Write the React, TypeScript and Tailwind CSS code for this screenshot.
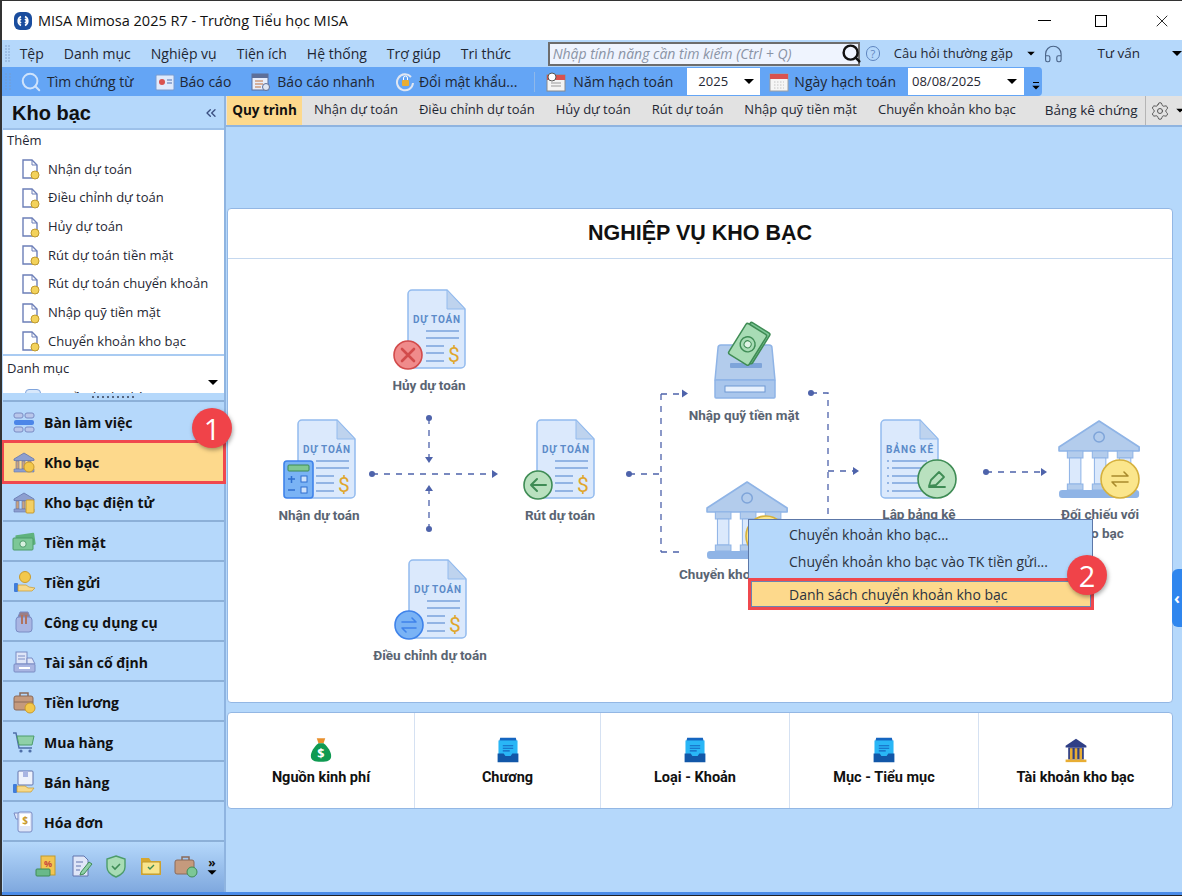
import { ChevronsLeft, Search, Settings, Headphones, X } from "lucide-react";

const menuItems = ["Tệp", "Danh mục", "Nghiệp vụ", "Tiện ích", "Hệ thống", "Trợ giúp", "Tri thức"];
const tabs = ["Nhận dự toán", "Điều chỉnh dự toán", "Hủy dự toán", "Rút dự toán", "Nhập quỹ tiền mặt", "Chuyển khoản kho bạc"];
const addLinks = ["Nhận dự toán", "Điều chỉnh dự toán", "Hủy dự toán", "Rút dự toán tiền mặt", "Rút dự toán chuyển khoản", "Nhập quỹ tiền mặt", "Chuyển khoản kho bạc"];

const Caret = ({ className = "" }: { className?: string }) => (
  <span className={`inline-block h-0 w-0 border-x-[5px] border-t-[5px] border-x-transparent border-t-black ${className}`} />
);

const Grip = () => (
  <div className="grid w-[6px] grid-cols-2 gap-[1px] opacity-40">
    {Array.from({ length: 12 }).map((_, i) => (
      <span key={i} className="h-[2px] w-[2px] bg-[#7a9cc8]" />
    ))}
  </div>
);

const SmallIcon = ({ children }: { children: React.ReactNode }) => (
  <svg viewBox="0 0 24 24" className="h-[24px] w-[24px] shrink-0">
    {children}
  </svg>
);

const BankShape = () => (
  <g>
    <path d="M2 9 12 3l10 6v1.5H2z" fill="#8d9fd0" stroke="#6275ad" strokeWidth=".8" />
    <path d="M4 11h3v8H4zM10 11h3v8h-3zM16 11h3v8h-3z" fill="#c9a27e" stroke="#6275ad" strokeWidth=".6" />
    <path d="M2 19h20v3H2z" fill="#8d9fd0" stroke="#6275ad" strokeWidth=".6" />
  </g>
);

const navItems: { label: string; active?: boolean; icon: React.ReactNode }[] = [
  {
    label: "Bàn làm việc",
    icon: (
      <SmallIcon>
        <rect x="2" y="3" width="9" height="5" rx="2" fill="#b9c6ea" stroke="#7a8cc4" />
        <rect x="13" y="3" width="9" height="5" rx="2" fill="#b9c6ea" stroke="#7a8cc4" />
        <rect x="2" y="10" width="20" height="5" rx="2" fill="#4c86e8" />
        <rect x="2" y="17" width="9" height="5" rx="2" fill="#b9c6ea" stroke="#7a8cc4" />
        <rect x="13" y="17" width="9" height="5" rx="2" fill="#b9c6ea" stroke="#7a8cc4" />
      </SmallIcon>
    ),
  },
  {
    label: "Kho bạc",
    active: true,
    icon: (
      <SmallIcon>
        <BankShape />
        <circle cx="17" cy="17" r="5" fill="#f3c84b" stroke="#c99a2c" />
      </SmallIcon>
    ),
  },
  {
    label: "Kho bạc điện tử",
    icon: (
      <SmallIcon>
        <BankShape />
        <rect x="14" y="10" width="8" height="13" rx="1" fill="#f3cf63" stroke="#c99a2c" />
      </SmallIcon>
    ),
  },
  {
    label: "Tiền mặt",
    icon: (
      <SmallIcon>
        <rect x="4" y="4" width="19" height="12" rx="1" fill="#5fb27d" transform="rotate(-8 13 10)" />
        <rect x="1" y="8" width="20" height="12" rx="1" fill="#7cc796" stroke="#4c9c6a" />
        <circle cx="11" cy="14" r="3.2" fill="#d8f0df" stroke="#4c9c6a" />
      </SmallIcon>
    ),
  },
  {
    label: "Tiền gửi",
    icon: (
      <SmallIcon>
        <circle cx="13" cy="7" r="5.5" fill="#f3c84b" stroke="#c99a2c" />
        <rect x="2" y="13" width="4" height="9" rx="1" fill="#3f7ddb" />
        <path d="M6 15h8l3 2 6 1-3 3H6z" fill="#f6d98a" stroke="#c99a2c" strokeWidth=".7" />
      </SmallIcon>
    ),
  },
  {
    label: "Công cụ dụng cụ",
    icon: (
      <SmallIcon>
        <path d="M8 2h8l2 5H6z" fill="#9a7f88" stroke="#7a8cc4" />
        <rect x="4" y="7" width="16" height="15" rx="3" fill="#a9b5e2" stroke="#7a8cc4" />
        <path d="M9 5h2v9H9zM13 5h2v9h-2z" fill="#b0735f" />
      </SmallIcon>
    ),
  },
  {
    label: "Tài sản cố định",
    icon: (
      <SmallIcon>
        <rect x="4" y="2" width="11" height="12" fill="#dfe6f8" stroke="#7a8cc4" />
        <path d="M6 6h7M6 9h7" stroke="#7a8cc4" />
        <path d="M15 8h5l3 6H15z" fill="#dfe6f8" stroke="#7a8cc4" />
        <rect x="2" y="14" width="21" height="8" rx="1" fill="#a9b5e2" stroke="#7a8cc4" />
        <rect x="7" y="17" width="11" height="2" fill="#fff" />
      </SmallIcon>
    ),
  },
  {
    label: "Tiền lương",
    icon: (
      <SmallIcon>
        <path d="M8 6V3h8v3" fill="none" stroke="#8a6a5a" strokeWidth="1.5" />
        <rect x="2" y="6" width="19" height="14" rx="2" fill="#c59a7d" stroke="#8a6a5a" />
        <path d="M2 12h19" stroke="#8a6a5a" />
        <circle cx="18" cy="18" r="5" fill="#f3c84b" stroke="#c99a2c" />
      </SmallIcon>
    ),
  },
  {
    label: "Mua hàng",
    icon: (
      <SmallIcon>
        <path d="M1 3h3l3 15h13" fill="none" stroke="#4f6fa8" strokeWidth="1.4" />
        <path d="M5 6h17l-2 9H7z" fill="#8fd0a8" stroke="#4c9c6a" />
        <circle cx="9" cy="21" r="1.6" fill="#4f6fa8" />
        <circle cx="18" cy="21" r="1.6" fill="#4f6fa8" />
      </SmallIcon>
    ),
  },
  {
    label: "Bán hàng",
    icon: (
      <SmallIcon>
        <rect x="6" y="1" width="15" height="14" rx="1" fill="#eef2fc" stroke="#6275ad" />
        <rect x="11" y="1" width="5" height="6" fill="#a9b5e2" />
        <rect x="1" y="14" width="4" height="9" rx="1" fill="#3f7ddb" />
        <path d="M5 16h8l3 2 6 0-3 4H5z" fill="#f6d98a" stroke="#c99a2c" strokeWidth=".7" />
      </SmallIcon>
    ),
  },
  {
    label: "Hóa đơn",
    icon: (
      <SmallIcon>
        <path d="M2 3h6v6H4z" fill="#dfe6f8" stroke="#7a8cc4" />
        <rect x="6" y="2" width="14" height="20" rx="2" fill="#dfe6f8" stroke="#7a8cc4" />
        <rect x="8" y="4" width="10" height="12" fill="#fff" />
        <text x="13" y="14" fontSize="10" fontWeight="700" textAnchor="middle" fill="#c99a2c">$</text>
      </SmallIcon>
    ),
  },
];

// coordinates of the diagram drawings below are page pixels (viewBox starts at the card corner)
const DocBase = ({ x, y, title = "DỰ TOÁN", dollar = true }: { x: number; y: number; title?: string; dollar?: boolean }) => (
  <g transform={`translate(${x} ${y})`}>
    <path d="M4 0h35l18 19v55a4 4 0 0 1-4 4H4a4 4 0 0 1-4-4V4a4 4 0 0 1 4-4z" fill="#dbe9fc" stroke="#93bbee" strokeWidth="1.5" />
    <path d="M39 0l18 19H39z" fill="#bed3ee" stroke="#93bbee" strokeWidth="1" />
    <text x="5" y="33" fontSize="10" fontWeight="700" fill="#5b8bc9" textLength="47" fontFamily="Roboto, sans-serif">{title}</text>
    {dollar ? (
      <g stroke="#7ba3dc" strokeWidth="1.4">
        <path d="M18 41h33M18 48h33M18 56h18M18 63h18M18 71h18" />
      </g>
    ) : (
      <g stroke="#7ba3dc" strokeWidth="1.4">
        <path d="M11 41h35M11 48h35M11 56h30M11 63h30M11 71h30" />
        <path d="M6 41h2M6 48h2M6 56h2M6 63h2M6 71h2" />
      </g>
    )}
    {dollar && <text x="46" y="72" fontSize="21" textAnchor="middle" fill="#e0a62c" fontFamily="Roboto, sans-serif">$</text>}
  </g>
);

const Bank = ({ x, y }: { x: number; y: number }) => (
  <g transform={`translate(${x} ${y}) scale(1.04 1)`}>
    <path d="M39.5 1 78 27v4H1v-4z" fill="#b3ccec" stroke="#8fb4e6" strokeWidth="1.6" strokeLinejoin="round" />
    <circle cx="39.5" cy="17" r="5" fill="#b3ccec" stroke="#7ea4d9" strokeWidth="1.4" />
    {[9, 33, 57].map((px) => (
      <g key={px}>
        <rect x={px} y="31" width="15" height="7" fill="#b3ccec" stroke="#8fb4e6" />
        <rect x={px + 2} y="38" width="11" height="26" fill="#dbe9fc" stroke="#8fb4e6" />
        <rect x={px} y="64" width="15" height="6" fill="#b3ccec" stroke="#8fb4e6" />
      </g>
    ))}
    <rect x="1" y="70" width="77" height="8" rx="3" fill="#8fb4e6" />
  </g>
);

const Badge = ({ cx, cy, r, fill, stroke, children }: { cx: number; cy: number; r: number; fill: string; stroke: string; children: React.ReactNode }) => (
  <g>
    <circle cx={cx} cy={cy} r={r} fill={fill} stroke={stroke} strokeWidth="1.6" />
    <g transform={`translate(${cx} ${cy})`} fill="none" stroke={stroke} strokeWidth="2" strokeLinecap="round" strokeLinejoin="round">
      {children}
    </g>
  </g>
);

const Dash = ({ d }: { d: string }) => <path d={d} fill="none" stroke="#4e63ab" strokeWidth="1.3" strokeDasharray="6 6" />;
const Dot = ({ x, y }: { x: number; y: number }) => <circle cx={x} cy={y} r="3" fill="#4e63ab" />;
const Tip = ({ x, y, dir }: { x: number; y: number; dir: "r" | "u" | "d" }) => {
  const pts = dir === "r" ? `${x - 5},${y - 4} ${x + 1},${y} ${x - 5},${y + 4}` : dir === "d" ? `${x - 4},${y - 5} ${x},${y + 1} ${x + 4},${y - 5}` : `${x - 4},${y + 5} ${x},${y - 1} ${x + 4},${y + 5}`;
  return <polygon points={pts} fill="#4e63ab" />;
};

const Diagram = () => (
  <svg viewBox="228 209 944 493" className="absolute inset-0 h-full w-full">
    <Dash d="M372 474H496" />
    <Dash d="M429 418V461" />
    <Dash d="M429 530V487" />
    <Dot x={372} y={474} /><Tip x={497} y={474} dir="r" />
    <Dot x={429} y={418} /><Tip x={429} y={462} dir="d" />
    <Dot x={429} y={529} /><Tip x={429} y={486} dir="u" />

    <Dot x={629} y={474} />
    <Dash d="M629 474H661M661 394V552M661 394H686M661 552H680" />
    <Tip x={687} y={393.500} dir="r" />
    <Dot x={811} y={393} />
    <Dash d="M811 393H828V530M828 471H856" />
    <Tip x={858} y={471} dir="r" />
    <Dot x={986} y={472} />
    <Dash d="M986 472H1044" />
    <Tip x={1046} y={472} dir="r" />

    <DocBase x={408} y={290} />
    <Badge cx={408} cy={355} r={14} fill="#f08b8b" stroke="#d24b4b">
      <path d="M-6-6 6 6M6-6-6 6" strokeWidth="2.600" />
    </Badge>

    <DocBase x={298} y={420} />
    <g>
      <rect x="284" y="461" width="29" height="37" rx="3" fill="#7ab3f5" stroke="#3f83ea" strokeWidth="1.6" />
      <rect x="288" y="465" width="21" height="6" rx="1" fill="#7fc793" stroke="#3c8a55" />
      <path d="M288 479h7M291.500 476v7M288 490h7" stroke="#2f6fd0" strokeWidth="1.5" />
      <rect x="301" y="476" width="6" height="6" fill="#cfe2fb" stroke="#2f6fd0" />
      <rect x="301" y="487" width="6" height="6" fill="#cfe2fb" stroke="#2f6fd0" />
    </g>

    <DocBase x={537} y={420} />
    <Badge cx={538} cy={485} r={14} fill="#b9e1bf" stroke="#3f8c55">
      <path d="M8 0H-7M-1-6-7 0-1 6" />
    </Badge>

    <DocBase x={409} y={560} />
    <Badge cx={409} cy={625} r={14} fill="#7ab3f5" stroke="#3f83ea">
      <path d="M-7-3H7M3-7 7-3M7 3H-7M-3 7-7 3" strokeWidth="1.6" />
    </Badge>

    {/* cash drawer */}
    <g>
      <path d="M727 345h42q3 0 3 3l3 32H715l3-32q0-3 3-3z" fill="#b3ccec" stroke="#8fb4e6" strokeWidth="1.5" />
      <rect x="730" y="363" width="32" height="5" rx="1" fill="#7ea4d9" />
      <rect x="715" y="380" width="60" height="18" rx="1" fill="#a9c6ec" stroke="#8fb4e6" strokeWidth="1.5" />
      <rect x="725" y="386" width="40" height="6" fill="#e6f0fd" stroke="#6f97d2" />
      <g transform="rotate(32 749 344)">
        <rect x="739" y="324" width="23" height="36" rx="2" fill="#7cc796" stroke="#3f8c55" strokeWidth="1.5" />
        <rect x="736" y="327" width="24" height="36" rx="2" fill="#a8dcb5" stroke="#3f8c55" strokeWidth="1.5" />
        <circle cx="748" cy="345" r="7.500" fill="#a8dcb5" stroke="#3f8c55" strokeWidth="1.4" />
        <circle cx="748" cy="345" r="3.500" fill="#dff3e4" stroke="#3f8c55" />
      </g>
    </g>

    <Bank x={706} y={481} />
    <circle cx="766" cy="536" r="20" fill="#fbe68c" stroke="#d6b13d" strokeWidth="1.6" />

    <DocBase x={881} y={420} title="BẢNG KÊ" dollar={false} />
    <Badge cx={937} cy={479} r={19} fill="#b9e1bf" stroke="#3f8c55">
      <path d="M-8 7-6 1 2-7l5 5-8 8zM-8 8H8" strokeWidth="1.8" />
    </Badge>

    <Bank x={1058} y={420} />
    <Badge cx={1120} cy={479} r={19} fill="#fbe68c" stroke="#d6b13d">
      <path d="M-8-3H8M4-7 8-3M8 3H-8M-4 7-8 3" stroke="#a98a2c" strokeWidth="1.6" />
    </Badge>
  </svg>
);

const nodeLabel = "absolute -translate-x-1/2 whitespace-nowrap font-['Roboto',_sans-serif] text-[13.500px] font-bold text-[#5a6472]";

const ContextMenu = () => (
  <div className="absolute left-[520px] top-[310px] z-10 flex h-[91px] w-[345px] flex-col border border-[#5c77a8] bg-[#b5d8fb] pt-px text-[14px] text-[#2c3340]">
    <div className="flex h-[27px] shrink-0 items-center pl-[40px]">Chuyển khoản kho bạc...</div>
    <div className="flex h-[27px] shrink-0 items-center pl-[40px]">Chuyển khoản kho bạc vào TK tiền gửi...</div>
    <div className="relative ml-[2px] mr-px mt-[6px] flex h-[26px] shrink-0 items-center border border-[#6b84b0] bg-[#fdd98c] pl-[37px] outline-[3px] outline-[#f0484e]">
      Danh sách chuyển khoản kho bạc
    </div>
  </div>
);

const Callout = ({ n, className }: { n: number; className: string }) => (
  <div className={`absolute z-20 flex h-[40px] w-[40px] items-center justify-center rounded-full bg-[#f04349] text-[29px] leading-none text-white shadow-[1px_2px_4px_rgba(0,0,0,0.35)] ${className}`}>
    {n}
  </div>
);

const MoneyBag = () => (
  <svg viewBox="0 0 26 30" className="h-[26px] w-[22px]">
    <path d="M8 1h10l-2 6h-6z" fill="#e88f2c" />
    <path d="M10 7h6c5 4 9 10 9 15 0 5-4 7-12 7S1 27 1 22c0-5 4-11 9-15z" fill="#0f9a52" />
    <text x="13" y="24" fontSize="15" fontWeight="700" fill="#fff" textAnchor="middle">$</text>
  </svg>
);

const Tray = () => (
  <svg viewBox="0 0 26 30" className="h-[26px] w-[24px]">
    <path d="M4 1h18l1 4H3z" fill="#1565c0" />
    <rect x="2" y="4" width="22" height="20" fill="#29b6f6" />
    <path d="M7 10h12M7 13h12M7 16h8" stroke="#1565c0" strokeWidth="1.2" />
    <path d="M1 19h7l2 3h6l2-3h7v10H1z" fill="#1257a8" />
  </svg>
);

const MiniBank = () => (
  <svg viewBox="0 0 26 30" className="h-[26px] w-[26px]">
    <path d="M13 2 25 10v2H1v-2z" fill="#2f3f86" />
    <path d="M4 12h18v14H4z" fill="#2f3f86" />
    <path d="M6 13h3v13H6zM11.500 13h3v13h-3zM17 13h3v13h-3z" fill="#e8ad33" />
    <rect x="1" y="26" width="24" height="3" fill="#e8ad33" />
  </svg>
);

const shortcuts = [
  { label: "Nguồn kinh phí", icon: <MoneyBag /> },
  { label: "Chương", icon: <Tray /> },
  { label: "Loại - Khoản", icon: <Tray /> },
  { label: "Mục - Tiểu mục", icon: <Tray /> },
  { label: "Tài khoản kho bạc", icon: <MiniBank /> },
];

export default function App() {
  return (
    <div className="relative flex h-[896px] w-[1182px] flex-col overflow-hidden border-l-2 border-t border-[#333] bg-[#b5d8fb] font-['Open_Sans',_sans-serif] text-[14px] text-[#1f2733]">
      {/* title bar */}
      <div className="flex h-[39px] shrink-0 items-center bg-white pl-[11px] text-[14.500px] text-[#111]">
        <svg viewBox="0 0 20 20" className="h-[20px] w-[20px]">
          <rect x="1" y="1" width="18" height="18" rx="6" fill="#1a4d9e" />
          <path d="M8 5.500A5 5 0 0 0 8 14.500M12 5.500A5 5 0 0 1 12 14.500M8 8 6 10l2 2M12 8l2 2-2 2" fill="none" stroke="#fff" strokeWidth="1.6" />
        </svg>
        <span className="ml-[5px]">MISA Mimosa 2025 R7 - Trường Tiểu học MISA</span>
        <div className="ml-auto flex items-center">
          <span className="mr-[44px] h-px w-[13px] bg-black" />
          <span className="mr-[45px] h-[12px] w-[12px] border border-black" />
          <X size={20} strokeWidth={1} className="mr-[10px] text-black" />
        </div>
      </div>

      {/* menu bar */}
      <div className="flex h-[27px] shrink-0 items-center whitespace-nowrap pl-[3px]">
        <Grip />
        <div className="ml-[9px] flex w-[528px] shrink-0 gap-[20px] text-[14px]">
          {menuItems.map((m) => (
            <span key={m}>{m}</span>
          ))}
        </div>
        <div className="flex h-[24px] w-[312px] shrink-0 items-center justify-between border-2 border-[#6d6d6d] bg-[#eff4fe] pl-[3px] text-[14px] italic text-[#8a93a5]">
          <span>Nhập tính năng cần tìm kiếm (Ctrl + Q)</span>
          <Search size={21} strokeWidth={2.8} className="relative left-[4px] text-[#111]" />
        </div>
        <span className="ml-[6px] flex h-[15px] w-[15px] items-center justify-center rounded-full border border-[#5f86c0] text-[11px] leading-none text-[#5f86c0]">?</span>
        <span className="ml-[14px] text-[13px]">Câu hỏi thường gặp</span>
        <Caret className="ml-[13px] scale-75" />
        <Headphones size={22} strokeWidth={1.3} className="ml-[7px] text-[#4a6488]" />
        <span className="ml-[34px] text-[13.500px]">Tư vấn</span>
        <Caret className="ml-[32px]" />
      </div>

      {/* tool bar */}
      <div className="flex h-[29px] w-[1040px] shrink-0 items-center rounded-r-sm bg-[#64a5f5] pl-[3px]">
        <Grip />
        <Search size={22} strokeWidth={2.2} className="ml-[9px] text-[#cfe3fb]" />
        <span className="ml-[5px]">Tìm chứng từ</span>
        <svg viewBox="0 0 20 20" className="ml-[21px] h-[20px] w-[20px]">
          <rect x="1" y="3" width="18" height="15" rx="1" fill="#dfeafc" stroke="#7a9cd0" />
          <circle cx="7" cy="10" r="3" fill="#d9524e" />
          <path d="M12 8h5M12 11h5" stroke="#4c6fb0" />
        </svg>
        <span className="ml-[5px]">Báo cáo</span>
        <svg viewBox="0 0 20 20" className="ml-[20px] h-[20px] w-[20px]">
          <rect x="1" y="2" width="16" height="16" fill="#e8eefb" stroke="#5d6f99" />
          <rect x="1" y="2" width="16" height="4" fill="#5d6f99" />
          <path d="M4 9h8M4 12h8M4 15h6" stroke="#c0703c" />
          <circle cx="15" cy="15" r="3.500" fill="#dfe6f2" stroke="#5d6f99" />
        </svg>
        <span className="ml-[6px]">Báo cáo nhanh</span>
        <svg viewBox="0 0 20 20" className="ml-[20px] h-[20px] w-[20px]">
          <path d="M16 5A8 8 0 1 0 18 11" fill="none" stroke="#dfe6f2" strokeWidth="2" />
          <rect x="7" y="8" width="7" height="6" rx="1" fill="#e8ad33" />
          <path d="M8.500 8V6a2 2 0 0 1 4 0v2" fill="none" stroke="#fff" />
        </svg>
        <span className="ml-[4px]">Đổi mật khẩu...</span>
        <span className="ml-[17px] h-[20px] w-px bg-[#8fb8ea]" />
        <svg viewBox="0 0 20 20" className="ml-[11px] h-[20px] w-[20px]">
          <rect x="1" y="3" width="18" height="16" fill="#f3f3f3" stroke="#8a8a8a" />
          <rect x="1" y="3" width="18" height="5" fill="#d9524e" />
          <circle cx="6" cy="5" r="4" fill="#fff" stroke="#555" />
          <path d="M5 11h10M5 14h10" stroke="#999" />
        </svg>
        <span className="ml-[7px]">Năm hạch toán</span>
        <div className="ml-[14px] flex h-[27px] w-[73px] items-center justify-between bg-white pl-[11px] pr-[6px] text-[13px]">
          2025
          <Caret />
        </div>
        <svg viewBox="0 0 20 20" className="ml-[9px] h-[20px] w-[20px]">
          <rect x="1" y="2" width="18" height="17" fill="#f5f5f5" stroke="#a0a0a0" />
          <rect x="1" y="2" width="18" height="5" fill="#d9524e" />
          <path d="M5 10h10M5 13h10M5 16h10" stroke="#c4c4c4" strokeDasharray="1.500 1.500" />
        </svg>
        <span className="ml-[5px]">Ngày hạch toán</span>
        <div className="ml-[12px] flex h-[27px] w-[116px] items-center justify-between bg-white pl-[4px] pr-[7px] text-[13px]">
          08/08/2025
          <Caret />
        </div>
        <div className="ml-[7px] flex flex-col items-center gap-[2px] pt-[8px]">
          <span className="h-[1px] w-[6px] bg-black" />
          <Caret className="scale-75" />
        </div>
      </div>

      <div className="flex min-h-0 flex-1">
        {/* left panel */}
        <aside className="ml-px flex w-[223px] shrink-0 flex-col border-r-2 border-[#8fb4e0]">
          <div className="flex h-[34px] shrink-0 items-center justify-between border-b-2 border-[#9dc1ea] pl-[9px] pr-[5px] pt-[2px]">
            <span className="font-['Liberation_Sans',_sans-serif] text-[20px] font-bold leading-none text-[#111]">Kho bạc</span>
            <ChevronsLeft size={16} strokeWidth={2} className="text-[#3b4f80]" />
          </div>
          <div className="h-[226px] shrink-0 border-b-2 border-[#a9cbf2] bg-white pl-[4px]">
            <div className="h-[25px] text-[13px] leading-[20px]">Thêm</div>
            <ul className="flex flex-col">
              {addLinks.map((t) => (
                <li key={t} className="flex h-[28.670px] items-center gap-[7px] pl-[14px] text-[13px]">
                  <svg viewBox="0 0 20 22" className="h-[22px] w-[20px] shrink-0">
                    <path d="M2 2h9l5 5v13H2z" fill="#fff" stroke="#6c7fb8" strokeWidth="1.4" />
                    <path d="M11 2v5h5" fill="none" stroke="#6c7fb8" />
                    <circle cx="14" cy="17" r="4" fill="#f3d25b" stroke="#bf9a2f" />
                  </svg>
                  {t}
                </li>
              ))}
            </ul>
          </div>
          <div className="relative h-[37px] shrink-0 overflow-hidden bg-white pl-[4px] pt-[2px] text-[13px] leading-[20px]">
            Danh mục
            <Caret className="absolute right-[6px] top-[24px]" />
            <div className="absolute left-[22px] top-[31px] flex h-[20px] items-center gap-[8px]">
              <span className="h-[16px] w-[16px] rounded-sm border border-[#7fa4dc] bg-[#d8e8fb]" />
              Nguồn kinh phí
            </div>
          </div>
          <div className="flex h-[7px] shrink-0 items-center justify-center">
            <span className="h-[2px] w-[44px] bg-[repeating-linear-gradient(90deg,#55657f_0_2px,transparent_2px_5px)]" />
          </div>
          <nav className="flex shrink-0 flex-col border-t-2 border-[#8cb0d8]">
            {navItems.map((n) => (
              <div
                key={n.label}
                className={
                  n.active
                    ? "relative z-[1] flex h-[40px] items-center gap-[11px] bg-[#fdd98c] pl-[12px] text-[14px] font-bold text-[#111] outline-[3px] outline-offset-[-1px] outline-[#f0484e]"
                    : "flex h-[40px] items-center gap-[11px] border-b-2 border-[#8cb0d8] pl-[12px] pt-[2px] text-[14px] font-bold text-[#111]"
                }
              >
                <span className="flex w-[18px] justify-center">{n.icon}</span>
                {n.label}
              </div>
            ))}
          </nav>
          <div className="flex min-h-0 flex-1 items-center bg-gradient-to-b from-[#b5d8fb] to-[#7fa8de] pb-[2px] pl-[31px]">
            <div className="flex items-center gap-[11px]">
              <SmallIcon>
                <rect x="7" y="2" width="14" height="19" fill="#f2c552" stroke="#bf9a2f" />
                <text x="14" y="13" fontSize="9" fontWeight="700" textAnchor="middle" fill="#c84a3e">%</text>
                <rect x="2" y="15" width="14" height="7" rx="1" fill="#69b98a" stroke="#3f8c55" />
              </SmallIcon>
              <SmallIcon>
                <path d="M4 2h11l4 4v16H4z" fill="#dfe6f8" stroke="#6275ad" />
                <path d="M7 8h7M7 12h5M7 16h4" stroke="#6275ad" />
                <path d="M12 18 20 8l3 2-8 10-4 1z" fill="#8fd0a8" stroke="#3f8c55" />
              </SmallIcon>
              <SmallIcon>
                <path d="M12 2 21 5v8c0 5-4 8-9 10-5-2-9-5-9-10V5z" fill="#a8dcb5" stroke="#4c9c6a" strokeWidth="1.4" />
                <path d="M8 12l3 3 5-5" fill="none" stroke="#3f8c55" strokeWidth="1.6" />
              </SmallIcon>
              <SmallIcon>
                <path d="M2 4h8l2 3h10v14H2z" fill="#d7a72f" />
                <rect x="3" y="8" width="18" height="12" rx="1" fill="#f8e48c" stroke="#bf9a2f" />
                <path d="M9 13l2 2 4-4" fill="none" stroke="#3f8c55" strokeWidth="1.4" />
              </SmallIcon>
              <SmallIcon>
                <path d="M8 6V3h7v3" fill="none" stroke="#8a6a5a" strokeWidth="1.5" />
                <rect x="1" y="6" width="19" height="14" rx="2" fill="#c59a7d" stroke="#8a6a5a" />
                <circle cx="18" cy="18" r="5" fill="#7cc796" stroke="#3f8c55" />
              </SmallIcon>
              <div className="-ml-[2px] flex flex-col items-center">
                <span className="text-[12px] font-bold leading-[10px] text-[#111]">»</span>
                <Caret className="mt-[2px] scale-90" />
              </div>
            </div>
          </div>
        </aside>

        {/* main area */}
        <main className="relative min-w-0 flex-1">
          <div className="flex h-[31px] items-center border-b-2 border-[#8fb4e0] bg-[#e2e2e2]">
            <div className="ml-px flex h-full w-[75px] shrink-0 items-center justify-center bg-[#fdd98c] text-[13.500px] font-bold text-[#111]">Quy trình</div>
            <div className="ml-[12px] flex w-[831px] shrink-0 gap-[21px] overflow-hidden whitespace-nowrap text-[13px]">
              {tabs.map((t) => (
                <span key={t} className="shrink-0">{t}</span>
              ))}
              <span className="ml-[8px] shrink-0 text-[13.500px]">Bảng kê chứng</span>
            </div>
            <div className="flex h-full flex-1 items-center gap-[5px] border-l border-[#b5b5b5] pl-[4px]">
              <Settings size={20} strokeWidth={1.2} className="text-[#555]" />
              <Caret className="scale-75" />
            </div>
          </div>

          <div className="ml-px mr-[9px] mt-[81px] flex flex-col gap-[9px]">
            <section className="relative h-[495px] rounded-sm border border-[#93b7e4] bg-white">
              <h2 className="flex h-[50px] items-center justify-center border-b border-[#c5d8ef] font-['Liberation_Sans',_sans-serif] text-[21.500px] font-bold text-[#111]">NGHIỆP VỤ KHO BẠC</h2>
              <Diagram />
              <span className={`${nodeLabel} left-[201px] top-[166px]`}>Hủy dự toán</span>
              <span className={`${nodeLabel} left-[91px] top-[296px]`}>Nhận dự toán</span>
              <span className={`${nodeLabel} left-[332px] top-[296px]`}>Rút dự toán</span>
              <span className={`${nodeLabel} left-[202px] top-[436px]`}>Điều chỉnh dự toán</span>
              <span className={`${nodeLabel} left-[516px] top-[196px]`}>Nhập quỹ tiền mặt</span>
              <span className={`${nodeLabel} left-[451px] top-[355px] translate-x-0`}>Chuyển khoản kho bạc</span>
              <span className={`${nodeLabel} left-[691px] top-[295px]`}>Lập bảng kê</span>
              <span className={`${nodeLabel} left-[872px] top-[296px] text-center leading-[19px]`}>
                Đối chiếu với
                <br />
                kho bạc
              </span>
              <ContextMenu />
            </section>

            <section className="grid h-[97px] grid-cols-[187px_186px_189px_189px_1fr] rounded-sm border border-[#93b7e4] bg-white">
              {shortcuts.map((s, i) => (
                <div key={s.label} className={`flex flex-col items-center justify-center gap-[5px] pt-[2px] ${i < 4 ? "border-r border-[#d5e1f2]" : ""}`}>
                  {s.icon}
                  <span className="font-['Roboto',_sans-serif] text-[14.500px] font-bold leading-[19px] text-[#111]">{s.label}</span>
                </div>
              ))}
            </section>
          </div>

          {/* panel collapse handle */}
          <div className="absolute right-0 top-[473px] flex h-[58px] w-[10px] items-center justify-center rounded-l-md bg-[#2f86ee] text-[16px] font-bold leading-none text-white">‹</div>
        </main>
      </div>

      <div className="h-[4px] shrink-0 border-b border-[#222] bg-[#4b8ce8]" />

      <Callout n={1} className="left-[190px] top-[407px]" />
      <Callout n={2} className="left-[1065px] top-[554px]" />
    </div>
  );
}
